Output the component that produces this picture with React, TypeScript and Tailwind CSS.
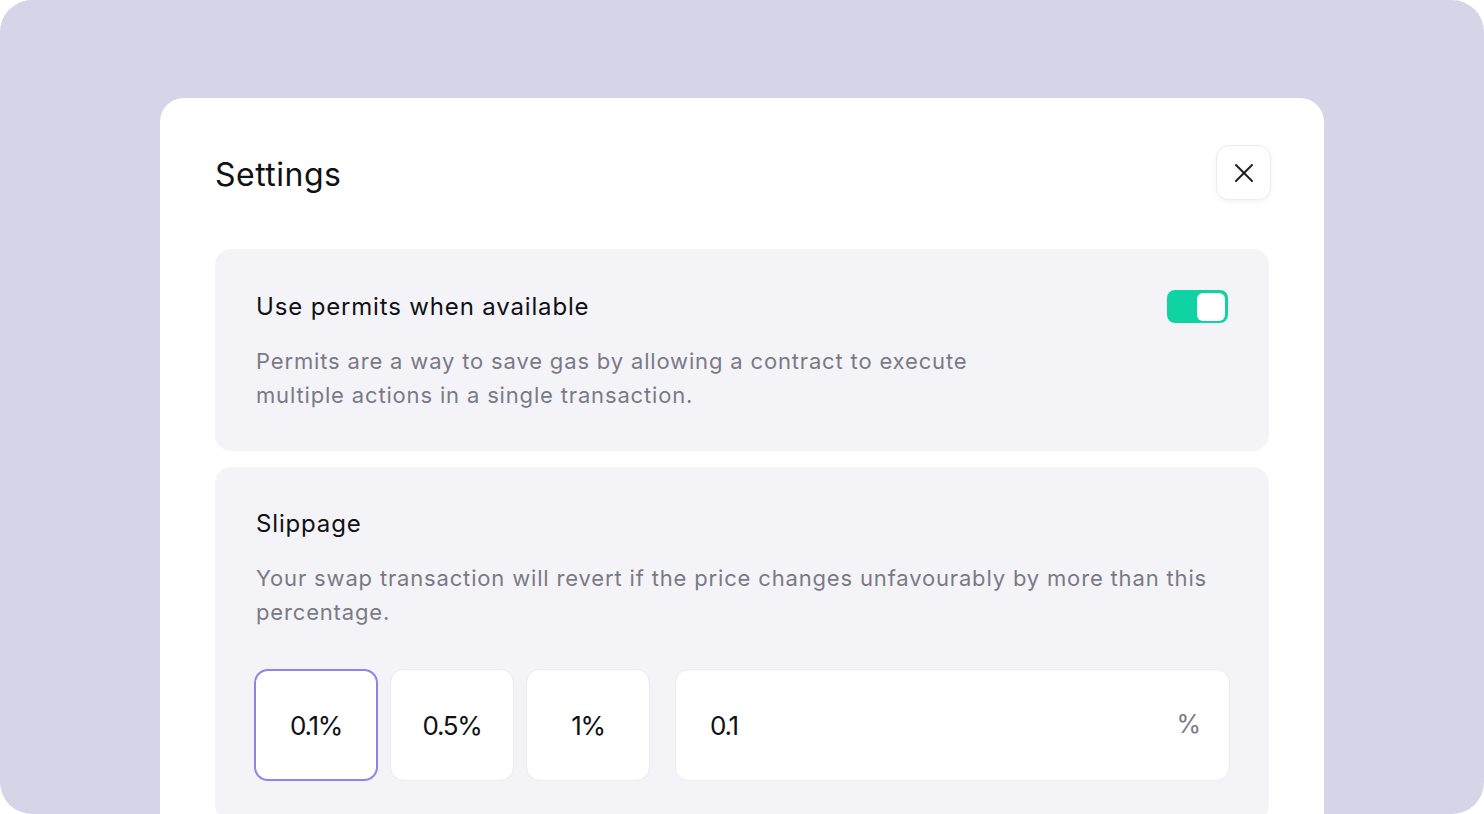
import { X } from 'lucide-react'
import { useState } from 'react'

const PRESETS = ['0.1%', '0.5%', '1%']

export default function App() {
  const [permits, setPermits] = useState(true)
  const [slippage, setSlippage] = useState('0.1')

  return (
    <div className="h-[814px] w-full bg-white font-['Inter',sans-serif]">
      <div className="h-full overflow-hidden rounded-[32px] bg-[#d6d5e7] px-[160px] pt-[98px]">
        <div className="h-[760px] rounded-t-[24px] bg-white px-[55px] pt-[47px]">
          {/* Header */}
          <div className="flex items-center justify-between">
            <h1 className="pt-[5px] text-[32px] leading-[40px] tracking-[0.015em] text-[#111114]">Settings</h1>
            <button
              type="button"
              className="-mr-[2px] flex h-[55px] w-[55px] items-center justify-center rounded-[13px] border border-[#ececf1] bg-white text-[#1c1c22] shadow-[0_2px_6px_rgba(20,20,40,0.05)]"
              aria-label="Close"
            >
              <X size={32} strokeWidth={1.5} />
            </button>
          </div>

          {/* Permits */}
          <div className="mt-[49px] rounded-[16px] bg-[#f4f4f8] px-[41px] pt-[41px] pb-[39px]">
            <div className="flex items-center justify-between">
              <h2 className="text-[24px] leading-[32px] tracking-[0.035em] text-[#111114]">Use permits when available</h2>
              <button
                type="button"
                onClick={() => setPermits(!permits)}
                className={`flex h-[33px] w-[61px] items-center rounded-[8px] p-[3px] ${
                  permits ? 'justify-end bg-[#0fd3a2]' : 'justify-start bg-[#d4d4dc]'
                }`}
                aria-label="Toggle permits"
              >
                <span className="h-[28px] w-[28px] rounded-[6px] bg-white" />
              </button>
            </div>
            <p className="mt-[21px] max-w-[760px] text-[22px] leading-[34px] tracking-[0.038em] text-[#7a7a86]">
              Permits are a way to save gas by allowing a contract to execute multiple actions in a single transaction.
            </p>
          </div>

          {/* Slippage */}
          <div className="mt-[16px] rounded-[16px] bg-[#f4f4f8] px-[41px] pt-[41px] pb-[40px]">
            <h2 className="text-[24px] leading-[32px] tracking-[0.035em] text-[#111114]">Slippage</h2>
            <p className="mt-[21px] text-[22px] leading-[34px] tracking-[0.038em] text-[#7a7a86]">
              Your swap transaction will revert if the price changes unfavourably by more than this percentage.
            </p>
            <div className="-mx-[2px] mt-[40px] flex items-center">
              <div className="flex gap-[12px]">
                {PRESETS.map((p) => {
                  const active = slippage + '%' === p
                  return (
                    <button
                      key={p}
                      type="button"
                      onClick={() => setSlippage(p.replace('%', ''))}
                      className={`flex h-[112px] w-[124px] items-center justify-center rounded-[14px] bg-white text-[26px] tracking-[-0.05em] text-[#111114] ${
                        active ? 'border-2 border-[#9083ea]' : 'border border-[#ececf1]'
                      }`}
                    >
                      {p}
                    </button>
                  )
                })}
              </div>
              <div className="ml-[25px] flex h-[112px] flex-1 items-center justify-between rounded-[14px] border border-[#ececf1] bg-white pr-[28px] pl-[34px]">
                <input
                  value={slippage}
                  onChange={(e) => setSlippage(e.target.value)}
                  className="w-full bg-transparent text-[26px] tracking-[-0.05em] text-[#111114] outline-none"
                />
                <span className="text-[25px] text-[#7a7a86]">%</span>
              </div>
            </div>
          </div>
        </div>
      </div>
    </div>
  )
}
